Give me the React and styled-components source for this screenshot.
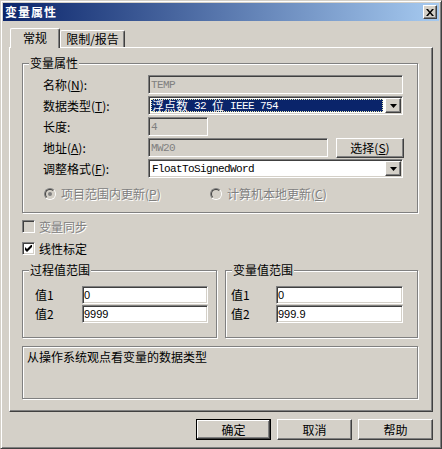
import React from 'react';
import styled, { createGlobalStyle, css } from 'styled-components';

const FACE = '#d4d0c8';
const LIGHT = '#ffffff';
const SHADOW = '#808080';
const DARK = '#404040';
const NAVY = '#0a246a';

const GlobalStyle = createGlobalStyle`
  html, body { margin: 0; padding: 0; background: ${FACE}; }
  body { font-family: "Noto Sans CJK SC", "Liberation Sans", sans-serif; font-size: 12px; color: #000; }
  * { box-sizing: border-box; }
`;

const raised = css`
  border: 1px solid;
  border-color: ${LIGHT} ${DARK} ${DARK} ${LIGHT};
  box-shadow: inset -1px -1px 0 ${SHADOW};
  background: ${FACE};
`;

const sunken = css`
  border: 1px solid;
  border-color: ${SHADOW} ${LIGHT} ${LIGHT} ${SHADOW};
  box-shadow: inset 1px 1px 0 ${DARK}, inset -1px -1px 0 ${FACE};
`;

const etched = css`
  border: 1px solid ${SHADOW};
  box-shadow: inset 1px 1px 0 ${LIGHT}, 1px 1px 0 ${LIGHT};
`;

const Window = styled.div`
  width: 442px;
  height: 449px;
  display: flex;
  flex-direction: column;
  background: ${FACE};
  border: 1px solid;
  border-color: ${FACE} ${DARK} ${DARK} ${FACE};
  box-shadow: inset 1px 1px 0 ${LIGHT}, inset -1px -1px 0 ${SHADOW};
  padding: 2px;
`;

const TitleBar = styled.div`
  height: 18px;
  flex: none;
  display: flex;
  align-items: center;
  justify-content: space-between;
  padding-left: 2px;
  background: linear-gradient(to right, ${NAVY}, #a6caf0);
`;

const TitleText = styled.span`
  color: #fff;
  font-weight: bold;
  font-size: 12px;
  letter-spacing: 1px;
  line-height: 18px;
`;

const CloseButton = styled.div`
  ${raised};
  width: 14px;
  height: 14px;
  margin-right: 2px;
  display: flex;
  align-items: center;
  justify-content: center;
`;

const Body = styled.div`
  flex: 1;
  display: flex;
  flex-direction: column;
  padding: 7px 6px 6px 6px;
`;

const TabStrip = styled.div`
  height: 19px;
  display: flex;
  align-items: flex-end;
  padding-left: 1px;
  position: relative;
  z-index: 1;
`;

const Tab = styled.div`
  background: ${FACE};
  border-top: 1px solid ${LIGHT};
  border-left: 1px solid ${LIGHT};
  border-right: 1px solid ${DARK};
  box-shadow: inset -1px 0 0 ${SHADOW};
  border-top-left-radius: 2px;
  border-top-right-radius: 2px;
  display: flex;
  align-items: center;
  justify-content: center;
  width: ${p => p.$w}px;
  height: ${p => (p.$active ? 20 : 17)}px;
  margin-bottom: ${p => (p.$active ? -1 : 0)}px;
  padding-bottom: ${p => (p.$active ? 1 : 0)}px;
  line-height: 14px;
`;

const Panel = styled.div`
  flex: 1;
  display: flex;
  flex-direction: column;
  border: 1px solid;
  border-color: ${LIGHT} ${DARK} ${DARK} ${LIGHT};
  box-shadow: inset -1px -1px 0 ${SHADOW};
  padding: 15px 14px 0 12px;
`;

const Group = styled.div`
  ${etched};
  position: relative;
  height: ${p => p.$h}px;
  width: ${p => (p.$w ? `${p.$w}px` : 'auto')};
  padding: ${p => p.$pad};
`;

const Legend = styled.span`
  position: absolute;
  top: -8px;
  left: 6px;
  padding: 0 1px;
  background: ${FACE};
  line-height: 14px;
`;

const FormGrid = styled.div`
  display: grid;
  grid-template-columns: ${p => p.$labelW}px auto;
  grid-auto-rows: ${p => p.$rowH}px;
  row-gap: ${p => p.$gap}px;
  align-items: center;
  justify-items: start;
`;

const Label = styled.span`
  line-height: 14px;
  white-space: nowrap;
`;

const U = styled.span`
  text-decoration: underline;
`;

const Mono = styled.span`
  font-family: "Liberation Mono", "DejaVu Sans Mono", monospace;
  font-size: 11px;
  line-height: 12px;
  letter-spacing: -0.6px;
  white-space: pre;
`;

const Edit = styled.div`
  ${sunken};
  width: ${p => p.$w}px;
  height: ${p => p.$h || 19}px;
  background: ${p => (p.$disabled ? FACE : LIGHT)};
  color: ${p => (p.$disabled ? SHADOW : '#000')};
  display: flex;
  align-items: center;
  padding-left: ${p => p.$pl ?? 2}px;
  line-height: 12px;
`;

const NumText = styled.span`
  font-family: "Liberation Sans", Arial, sans-serif;
  font-size: 11px;
  line-height: 12px;
`;

const Combo = styled.div`
  ${sunken};
  width: 255px;
  height: 19px;
  background: ${LIGHT};
  display: flex;
  align-items: stretch;
  padding: 2px;
`;

const ComboText = styled.div`
  flex: 1;
  display: flex;
  align-items: center;
  padding-left: 1px;
  margin-right: 2px;
  line-height: 12px;
  background: ${p => (p.$selected ? NAVY : 'transparent')};
  color: ${p => (p.$selected ? '#fff' : '#000')};
  outline: ${p => (p.$selected ? '1px dotted #e8e8b0' : 'none')};
  outline-offset: -1px;
  white-space: nowrap;
`;

const ArrowButton = styled.div`
  ${raised};
  width: 16px;
  display: flex;
  align-items: center;
  justify-content: center;
  margin: -1px -1px -1px 0;
`;

const Row = styled.div`
  display: flex;
  align-items: center;
  gap: ${p => p.$gap || 0}px;
`;

const PushButton = styled.div`
  ${raised};
  width: ${p => p.$w}px;
  height: ${p => p.$h}px;
  display: flex;
  align-items: center;
  justify-content: center;
  line-height: 14px;
  ${p =>
    p.$default &&
    css`
      border: 1px solid #000;
      box-shadow: inset -1px -1px 0 ${DARK}, inset 1px 1px 0 ${LIGHT}, inset -2px -2px 0 ${SHADOW};
    `}
`;

const RadioRow = styled.div`
  display: flex;
  align-items: center;
  margin-top: 9px;
  padding-left: 1px;
  height: 13px;
`;

const RadioItem = styled.div`
  display: flex;
  align-items: center;
  gap: 5px;
  width: ${p => (p.$w ? `${p.$w}px` : 'auto')};
`;

const RadioOuter = styled.span`
  width: 12px;
  height: 12px;
  border-radius: 50%;
  border: 1px solid;
  border-color: ${SHADOW} ${LIGHT} ${LIGHT} ${SHADOW};
  display: flex;
  flex: none;
`;

const RadioInner = styled.span`
  flex: 1;
  border-radius: 50%;
  border: 1px solid;
  border-color: ${DARK} ${FACE} ${FACE} ${DARK};
  background: ${FACE};
  display: flex;
  align-items: center;
  justify-content: center;
`;

const RadioDot = styled.span`
  width: 4px;
  height: 4px;
  border-radius: 50%;
  background: ${SHADOW};
`;

const DisabledText = styled.span`
  color: ${SHADOW};
  text-shadow: 1px 1px 0 ${LIGHT};
  line-height: 14px;
  white-space: nowrap;
`;

const CheckRow = styled.div`
  display: flex;
  align-items: center;
  gap: 4px;
  height: 13px;
  margin-top: ${p => p.$mt}px;
`;

const CheckBox = styled.span`
  ${sunken};
  width: 13px;
  height: 13px;
  flex: none;
  background: ${p => (p.$disabled ? FACE : LIGHT)};
  display: flex;
  align-items: center;
  justify-content: center;
`;

const RangeRow = styled.div`
  display: flex;
  gap: 8px;
  margin-top: 15px;
`;

const DescBox = styled.div`
  ${etched};
  margin-top: 8px;
  height: 53px;
  padding: 3px 4px;
  line-height: 14px;
`;

const ButtonBar = styled.div`
  display: flex;
  justify-content: flex-end;
  gap: 6px;
  margin-top: 7px;
`;

const DownArrow = () => (
  <svg width="7" height="4" viewBox="0 0 7 4">
    <path d="M0 0h7L3.5 4z" fill="#000" />
  </svg>
);

const CloseGlyph = () => (
  <svg width="8" height="7" viewBox="0 0 8 7">
    <path d="M0 0h2l2 2.4L6 0h2L5 3.5 8 7H6L4 4.6 2 7H0l3-3.5z" fill="#000" />
  </svg>
);

const CheckMark = () => (
  <svg width="7" height="7" viewBox="0 0 7 7">
    <path d="M0 2v3l2 2 5-5V-1L2 4z" fill="#000" />
  </svg>
);

const Radio = ({ checked }) => (
  <RadioOuter>
    <RadioInner>{checked && <RadioDot />}</RadioInner>
  </RadioOuter>
);

export default function App() {
  return (
    <>
      <GlobalStyle />
      <Window>
        <TitleBar>
          <TitleText>变量属性</TitleText>
          <CloseButton>
            <CloseGlyph />
          </CloseButton>
        </TitleBar>
        <Body>
          <TabStrip>
            <Tab $active $w={50}>常规</Tab>
            <Tab $w={65}>限制/报告</Tab>
          </TabStrip>
          <Panel>
            <Group $h={150} $pad="11px 14px 0 20px">
              <Legend>变量属性</Legend>
              <FormGrid $labelW={105} $rowH={19} $gap={2}>
                <Label>名称(<U>N</U>):</Label>
                <Edit $w={255} $disabled>
                  <Mono>TEMP</Mono>
                </Edit>
                <Label>数据类型(<U>T</U>):</Label>
                <Combo>
                  <ComboText $selected>
                    浮点数<Mono> 32 </Mono>位<Mono> IEEE 754</Mono>
                  </ComboText>
                  <ArrowButton>
                    <DownArrow />
                  </ArrowButton>
                </Combo>
                <Label>长度:</Label>
                <Edit $w={60} $disabled>
                  <Mono>4</Mono>
                </Edit>
                <Label>地址(<U>A</U>):</Label>
                <Row $gap={8}>
                  <Edit $w={180} $disabled>
                    <Mono>MW20</Mono>
                  </Edit>
                  <PushButton $w={68} $h={20}>
                    选择(<U>S</U>)
                  </PushButton>
                </Row>
                <Label>调整格式(<U>F</U>):</Label>
                <Combo>
                  <ComboText>
                    <Mono>FloatToSignedWord</Mono>
                  </ComboText>
                  <ArrowButton>
                    <DownArrow />
                  </ArrowButton>
                </Combo>
              </FormGrid>
              <RadioRow>
                <RadioItem $w={166}>
                  <Radio checked />
                  <DisabledText>项目范围内更新(<U>P</U>)</DisabledText>
                </RadioItem>
                <RadioItem>
                  <Radio />
                  <DisabledText>计算机本地更新(<U>C</U>)</DisabledText>
                </RadioItem>
              </RadioRow>
            </Group>

            <CheckRow $mt={7}>
              <CheckBox $disabled />
              <DisabledText>变量同步</DisabledText>
            </CheckRow>
            <CheckRow $mt={9}>
              <CheckBox>
                <CheckMark />
              </CheckBox>
              <Label>线性标定</Label>
            </CheckRow>

            <RangeRow>
              <Group $h={68} $w={195} $pad="15px 0 0 12px">
                <Legend>过程值范围</Legend>
                <FormGrid $labelW={47} $rowH={18} $gap={1}>
                  <Label>值1</Label>
                  <Edit $w={126} $h={18} $pl={1}>
                    <NumText>0</NumText>
                  </Edit>
                  <Label>值2</Label>
                  <Edit $w={126} $h={18} $pl={1}>
                    <NumText>9999</NumText>
                  </Edit>
                </FormGrid>
              </Group>
              <Group $h={68} $w={193} $pad="15px 0 0 5px">
                <Legend>变量值范围</Legend>
                <FormGrid $labelW={45} $rowH={18} $gap={1}>
                  <Label>值1</Label>
                  <Edit $w={127} $h={18} $pl={1}>
                    <NumText>0</NumText>
                  </Edit>
                  <Label>值2</Label>
                  <Edit $w={127} $h={18} $pl={1}>
                    <NumText>999.9</NumText>
                  </Edit>
                </FormGrid>
              </Group>
            </RangeRow>

            <DescBox>从操作系统观点看变量的数据类型</DescBox>
          </Panel>
          <ButtonBar>
            <PushButton $default $w={75} $h={21}>确定</PushButton>
            <PushButton $w={75} $h={21}>取消</PushButton>
            <PushButton $w={75} $h={21}>帮助</PushButton>
          </ButtonBar>
        </Body>
      </Window>
    </>
  );
}
